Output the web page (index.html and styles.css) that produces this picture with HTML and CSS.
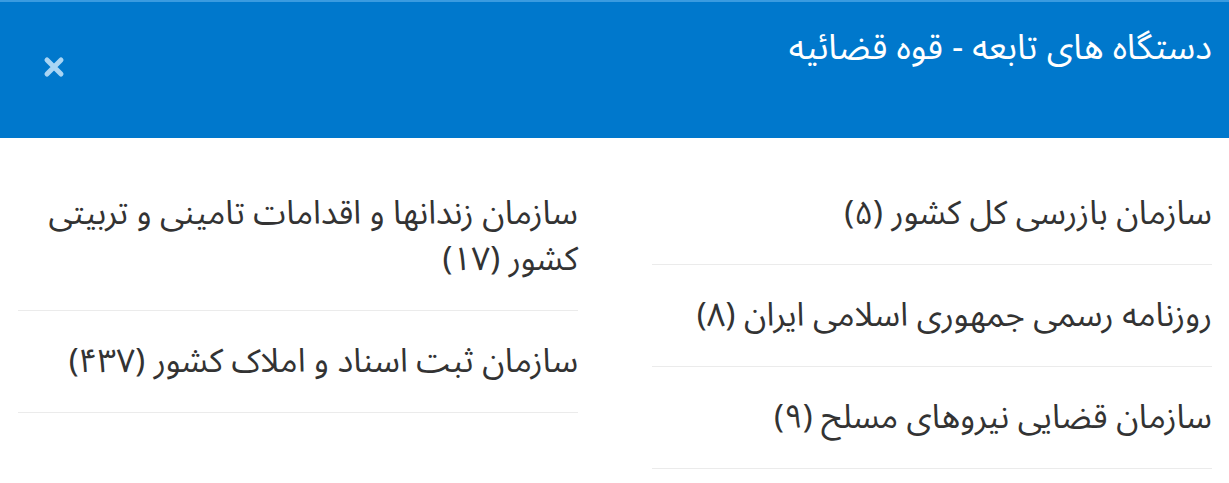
FILE: index.html
```html
<!DOCTYPE html>
<html lang="fa" dir="rtl">
<head>
    <meta charset="UTF-8">
    <meta name="viewport" content="width=device-width, initial-scale=1.0">
    <title>دستگاه های تابعه</title>
    <link rel="stylesheet" href="styles.css">
</head>
<body>
    <div class="modal-header">
        <h1 class="modal-title">دستگاه های تابعه - قوه قضائیه</h1>
        <span class="close-btn">
            <svg width="22" height="22" viewBox="0 0 22 22">
                <path d="M4 4 L18 18 M18 4 L4 18" stroke="#a9d5f4" stroke-width="5" stroke-linecap="round"/>
            </svg>
        </span>
    </div>

    <div class="list-grid">
        <ul class="list-col">
            <li>سازمان بازرسی کل کشور (۵)</li>
            <li>روزنامه رسمی جمهوری اسلامی ایران (۸)</li>
            <li>سازمان قضایی نیروهای مسلح (۹)</li>
        </ul>
        <ul class="list-col">
            <li>سازمان زندانها و اقدامات تامینی و تربیتی کشور (۱۷)</li>
            <li>سازمان ثبت اسناد و املاک کشور (۴۳۷)</li>
        </ul>
    </div>
</body>
</html>
```
FILE: styles.css
```css
body {
    margin: 0;
    font-family: "Noto Sans Arabic", "DejaVu Sans", "Noto Sans", sans-serif;
    background: #fff;
    color: #333;
}
.modal-header {
    background: #0078cc;
    border-top: 2px solid #3a9be0;
    height: 136px;
    display: flex;
    justify-content: space-between;
    align-items: flex-start;
    padding: 0 17px 0 43px;
}
.modal-title {
    margin: 24px 0 0;
    font-size: 35px;
    font-weight: normal;
    color: #fff;
    line-height: 44px;
}
.close-btn {
    margin-top: 54px;
    display: block;
    width: 22px;
    height: 22px;
}
.list-grid {
    display: grid;
    grid-template-columns: 560px 560px;
    column-gap: 74px;
    padding: 25px 17px 0 18px;
}
.list-col {
    list-style: none;
    margin: 0;
    padding: 0;
}
.list-col li {
    font-size: 33px;
    line-height: 46px;
    padding: 28px 0 27px;
    border-bottom: 1px solid #ebebeb;
}
```
